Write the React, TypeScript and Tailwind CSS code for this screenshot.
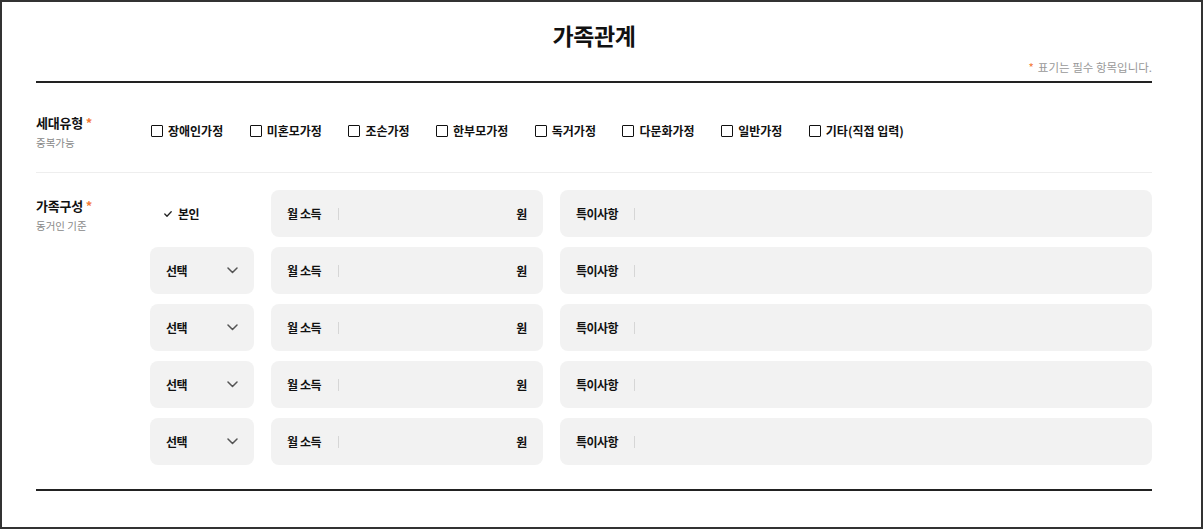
import React from "react";

const checks = ["장애인가정", "미혼모가정", "조손가정", "한부모가정", "독거가정", "다문화가정", "일반가정", "기타(직접 입력)"];

function Chevron() {
  return (
    <svg width="11" height="7" viewBox="0 0 11 7" fill="none">
      <polyline points="1,1 5.5,5.5 10,1" stroke="#555" strokeWidth="1.5" strokeLinecap="round" strokeLinejoin="round" />
    </svg>
  );
}

function Check() {
  return (
    <svg width="8" height="6" viewBox="0 0 8 6" fill="none">
      <polyline points="0.8,3 3,5.2 7.2,0.8" stroke="#222" strokeWidth="1.3" strokeLinecap="round" strokeLinejoin="round" />
    </svg>
  );
}

function Income() {
  return (
    <div className="h-[47px] rounded-[8px] bg-[#f2f2f2] flex items-center px-[16px] text-[12px] font-bold tracking-[-0.4px]">
      <span>월 소득</span>
      <span className="ml-[17px] w-px h-[12px] bg-[#d6d6d6]" />
      <span className="ml-auto">원</span>
    </div>
  );
}

function Note() {
  return (
    <div className="h-[47px] rounded-[8px] bg-[#f2f2f2] flex items-center px-[16px] text-[12px] font-bold tracking-[-0.5px]">
      <span>특이사항</span>
      <span className="ml-[16px] w-px h-[12px] bg-[#d6d6d6]" />
    </div>
  );
}

function Select() {
  return (
    <div className="h-[47px] rounded-[8px] bg-[#f2f2f2] flex items-center pl-[16px] pr-[16px] text-[12px] font-bold tracking-[-0.5px]">
      <span>선택</span>
      <span className="ml-auto flex items-center">
        <Chevron />
      </span>
    </div>
  );
}

export default function App() {
  return (
    <div className="w-[1203px] h-[529px] border-2 border-[#333] bg-white text-[#111] font-['Noto_Sans_CJK_KR','Noto_Sans',sans-serif]">
      <div className="ml-[34px] w-[1116px]">
        <h1 className="pt-[20px] text-center text-[23px] leading-[27px] font-bold tracking-[-0.4px]">가족관계</h1>
        <p className="mt-[11px] text-right text-[11.5px] leading-[14px] text-[#999]">
          <span className="text-[#f47a38]">*</span>
          <span className="ml-[4px]">표기는 필수 항목입니다.</span>
        </p>
        <div className="mt-[7px] h-[2px] bg-[#222]" />

        <div className="flex h-[90px] border-b border-[#eee]">
          <div className="w-[115px] pt-[31px]">
            <div className="text-[13px] leading-[18px] font-bold tracking-[-0.2px]">
              세대유형 <span className="text-[#f47a38]">*</span>
            </div>
            <div className="mt-[4px] text-[10.5px] leading-[14px] text-[#888]">중복가능</div>
          </div>
          <div className="pt-[39px] flex gap-[26.5px]">
            {checks.map((c) => (
              <label key={c} className="flex items-center h-[18px]">
                <span className="w-[12px] h-[12px] border-[1.6px] border-[#111] rounded-[1px] bg-white" />
                <span className="ml-[5px] text-[12px] font-bold">{c}</span>
              </label>
            ))}
          </div>
        </div>

        <div className="flex pt-[17px] pb-[24px]">
          <div className="w-[114px] pt-[7px]">
            <div className="text-[13px] leading-[18px] font-bold tracking-[-0.2px]">
              가족구성 <span className="text-[#f47a38]">*</span>
            </div>
            <div className="mt-[4px] text-[10.5px] leading-[14px] text-[#888]">동거인 기준</div>
          </div>
          <div className="flex-1 grid grid-cols-[104px_272px_1fr] gap-x-[17px] gap-y-[10px]">
            <div className="h-[47px] flex items-center pl-[14px] text-[12px] font-bold tracking-[-0.5px]">
              <Check />
              <span className="ml-[6px]">본인</span>
            </div>
            <Income />
            <Note />
            {[0, 1, 2, 3].map((i) => (
              <React.Fragment key={i}>
                <Select />
                <Income />
                <Note />
              </React.Fragment>
            ))}
          </div>
        </div>
        <div className="h-[2px] bg-[#222]" />
      </div>
    </div>
  );
}
